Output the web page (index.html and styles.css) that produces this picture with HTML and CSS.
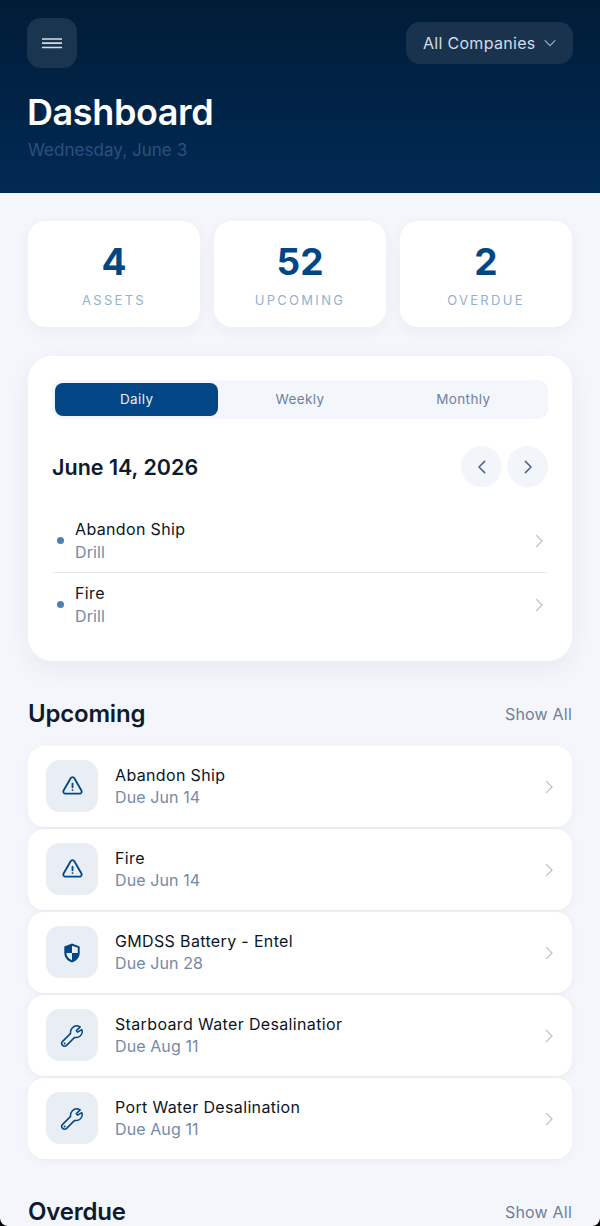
FILE: index.html
```html
<!doctype html>
<html>
  <head>
    <meta name="viewport" content="width=device-width,initial-scale=1.0" />
    <title>Dashboard</title>
    <link rel="stylesheet" href="styles.css">
  </head>
  <body>
    <svg class="icon-defs" width="0" height="0">
      <symbol id="chev-right" viewBox="0 0 24 24"><path d="M8.500 4.500 16 12 8.500 19.500" fill="none" stroke="currentColor" stroke-linecap="round" stroke-linejoin="round"/></symbol>
      <symbol id="chev-left" viewBox="0 0 24 24"><path d="M15.500 4.500 8 12 15.500 19.500" fill="none" stroke="currentColor" stroke-linecap="round" stroke-linejoin="round"/></symbol>
      <symbol id="warn" viewBox="0 0 24 24"><path d="M12 9v3.750m-9.300 3.380c-.87 1.500.22 3.370 1.950 3.370h14.700c1.730 0 2.810-1.870 1.950-3.370L13.950 3.380c-.87-1.500-3.030-1.500-3.900 0L2.700 16.130ZM12 15.750h.01v.01H12v-.01Z" fill="none" stroke="currentColor" stroke-width="1.900" stroke-linecap="round" stroke-linejoin="round"/></symbol>
      <symbol id="shield" viewBox="0 0 24 24"><path fill-rule="evenodd" d="M12 1.700 20.400 5v6.600c0 5-3.400 8.900-8.400 10.700-5-1.800-8.400-5.700-8.400-10.700V5L12 1.700ZM12 4v8H5.800c.3 3.700 2.900 6.500 6.200 7.900V12h6.200c.1-.4.100-.8.100-1.200V6.400L12 4Z" fill="currentColor"/></symbol>
      <symbol id="wrench" viewBox="0 0 24 24"><path d="M2.600 17.400 10.600 9.400C10 5.200 13.200 1.600 17.400 1.800L20.200 2.900 16.300 6.600 17.600 8.200 21.800 5.600 22.300 8.200C21.600 11.800 18.400 14 14.600 13.400L6.600 21.400C5.500 22.500 3.700 22.500 2.600 21.400 1.500 20.300 1.500 18.500 2.600 17.400Z" fill="none" stroke="currentColor" stroke-width="1.500" stroke-linejoin="round"/><circle cx="4.600" cy="19.400" r="1" fill="currentColor"/></symbol>
    </svg>

    <div class="screen">
      <header class="hero">
        <div class="hero-top">
          <button class="menu-btn">
            <svg width="20" height="20" viewBox="0 0 20 20"><path d="M0 6h20M0 10.200h20M0 14.500h20" stroke="#d5dde6" stroke-width="1.700" fill="none"/></svg>
          </button>
          <button class="company-btn">
            <span>All Companies</span>
            <svg class="company-chev" width="14" height="14" viewBox="0 0 24 24"><path d="M3.500 8 12 16.500 20.500 8" fill="none" stroke="currentColor" stroke-width="1.800" stroke-linecap="round" stroke-linejoin="round"/></svg>
          </button>
        </div>
        <h1>Dashboard</h1>
        <p class="hero-date">Wednesday, June 3</p>
      </header>

      <main class="content">
        <section class="stats">
          <div class="stat"><div class="stat-num">4</div><div class="stat-label">ASSETS</div></div>
          <div class="stat"><div class="stat-num">52</div><div class="stat-label">UPCOMING</div></div>
          <div class="stat"><div class="stat-num">2</div><div class="stat-label">OVERDUE</div></div>
        </section>

        <section class="calendar">
          <div class="tabs">
            <div class="tab active">Daily</div>
            <div class="tab">Weekly</div>
            <div class="tab">Monthly</div>
          </div>
          <div class="cal-head">
            <h2>June 14, 2026</h2>
            <div class="cal-nav">
              <button class="round-btn"><svg width="18" height="18"><use href="#chev-left"/></svg></button>
              <button class="round-btn"><svg width="18" height="18"><use href="#chev-right"/></svg></button>
            </div>
          </div>
          <div class="event">
            <span class="dot"></span>
            <div class="event-text"><div class="name">Abandon Ship</div><div class="sub">Drill</div></div>
            <svg class="chev" width="18" height="18"><use href="#chev-right"/></svg>
          </div>
          <div class="event">
            <span class="dot"></span>
            <div class="event-text"><div class="name">Fire</div><div class="sub">Drill</div></div>
            <svg class="chev" width="18" height="18"><use href="#chev-right"/></svg>
          </div>
        </section>

        <div class="section-head">
          <h3>Upcoming</h3>
          <a class="show-all">Show All</a>
        </div>
        <section class="task-list">
          <div class="task">
            <div class="task-icon"><svg width="23" height="23"><use href="#warn"/></svg></div>
            <div class="event-text"><div class="name">Abandon Ship</div><div class="sub">Due Jun 14</div></div>
            <svg class="chev" width="18" height="18"><use href="#chev-right"/></svg>
          </div>
          <div class="task">
            <div class="task-icon"><svg width="23" height="23"><use href="#warn"/></svg></div>
            <div class="event-text"><div class="name">Fire</div><div class="sub">Due Jun 14</div></div>
            <svg class="chev" width="18" height="18"><use href="#chev-right"/></svg>
          </div>
          <div class="task">
            <div class="task-icon"><svg width="22" height="22"><use href="#shield"/></svg></div>
            <div class="event-text"><div class="name">GMDSS Battery - Entel</div><div class="sub">Due Jun 28</div></div>
            <svg class="chev" width="18" height="18"><use href="#chev-right"/></svg>
          </div>
          <div class="task">
            <div class="task-icon"><svg width="24" height="24"><use href="#wrench"/></svg></div>
            <div class="event-text"><div class="name">Starboard Water Desalinatior</div><div class="sub">Due Aug 11</div></div>
            <svg class="chev" width="18" height="18"><use href="#chev-right"/></svg>
          </div>
          <div class="task">
            <div class="task-icon"><svg width="24" height="24"><use href="#wrench"/></svg></div>
            <div class="event-text"><div class="name">Port Water Desalination</div><div class="sub">Due Aug 11</div></div>
            <svg class="chev" width="18" height="18"><use href="#chev-right"/></svg>
          </div>
        </section>

        <div class="section-head overdue">
          <h3>Overdue</h3>
          <a class="show-all">Show All</a>
        </div>
      </main>
    </div>
  </body>
</html>
```

FILE: styles.css
```css
html, body {
  margin: 0;
  background: #000;
}
body {
  font-family: Inter, "Liberation Sans", sans-serif;
  color: #0f1b2b;
}
button {
  font-family: inherit;
  border: none;
  padding: 0;
}
h1, h2, h3, p {
  margin: 0;
}
.icon-defs {
  position: absolute;
}

.screen {
  width: 600px;
  height: 1226px;
  overflow: hidden;
  background: #f4f6fb;
  border-radius: 0 0 8px 8px;
}

.hero {
  height: 193px;
  box-sizing: border-box;
  padding: 18px 27px 0 27px;
  background: linear-gradient(180deg, #001c37 0%, #012a54 100%);
}
.hero-top {
  display: flex;
  justify-content: space-between;
  align-items: center;
  height: 50px;
}
.menu-btn {
  width: 50px;
  height: 50px;
  border-radius: 14px;
  background: #1a3550;
  display: flex;
  align-items: center;
  justify-content: center;
}
.company-btn {
  width: 167px;
  height: 42px;
  border-radius: 14px;
  background: #19334f;
  color: #d3dbe4;
  font-size: 16px;
  letter-spacing: 0.3px;
  display: flex;
  align-items: center;
  padding-left: 17px;
  gap: 7px;
  box-sizing: border-box;
}
.company-chev {
  color: #a9b6c4;
}
.hero h1 {
  margin: 22px 0 0;
  font-size: 36px;
  line-height: 44px;
  font-weight: 600;
  letter-spacing: -0.4px;
  color: #fff;
}
.hero-date {
  margin: 6px 0 0 1px;
  font-size: 17.100px;
  line-height: 20px;
  color: #2a5180;
}

.content {
  padding: 28px 28px 0;
}

.stats {
  display: grid;
  grid-template-columns: repeat(3, 1fr);
  gap: 14px;
}
.stat {
  height: 106px;
  box-sizing: border-box;
  background: #fff;
  border-radius: 18px;
  box-shadow: 0 4px 14px rgba(30, 50, 90, 0.05);
  text-align: center;
  padding-top: 19px;
}
.stat-num {
  font-size: 37px;
  line-height: 44px;
  font-weight: 700;
  color: #034685;
}
.stat-label {
  margin-top: 8px;
  font-size: 13px;
  line-height: 16px;
  letter-spacing: 2.300px;
  color: #93b2d0;
}

.calendar {
  margin-top: 29px;
  height: 305px;
  box-sizing: border-box;
  background: #fff;
  border-radius: 24px;
  box-shadow: 0 8px 24px rgba(30, 50, 90, 0.06);
  padding: 24px 24px 0;
}
.tabs {
  display: grid;
  grid-template-columns: repeat(3, 1fr);
  height: 39px;
  box-sizing: border-box;
  padding: 3px;
  background: #f3f6fa;
  border-radius: 10px;
}
.tab {
  display: flex;
  align-items: center;
  justify-content: center;
  padding-bottom: 1px;
  font-size: 13.500px;
  letter-spacing: 0.4px;
  color: #6f7f9d;
  border-radius: 8px;
}
.tab.active {
  background: #034685;
  color: #e9eff6;
}

.cal-head {
  display: flex;
  justify-content: space-between;
  align-items: center;
  margin-top: 27px;
  height: 41px;
}
.cal-head h2 {
  font-size: 21.500px;
  font-weight: 600;
  color: #0f1b2b;
}
.cal-nav {
  display: flex;
  gap: 5px;
}
.round-btn {
  width: 41px;
  height: 41px;
  border-radius: 50%;
  background: #f2f5f9;
  color: #4f6488;
  stroke-width: 2;
  display: flex;
  align-items: center;
  justify-content: center;
}

.event {
  display: flex;
  align-items: center;
  height: 63px;
  border-bottom: 1px solid #e6e9ee;
  padding: 0 0 0 5px;
}
.cal-head + .event {
  margin-top: 22px;
}
.event:last-child {
  border-bottom: none;
}
.dot {
  width: 7px;
  height: 7px;
  border-radius: 50%;
  background: #4682b8;
  margin-right: 11px;
}
.event-text {
  flex: 1;
}
.name {
  font-size: 16px;
  line-height: 23px;
  letter-spacing: 0.35px;
  color: #0b1625;
}
.sub {
  font-size: 16px;
  line-height: 22px;
  letter-spacing: 0.1px;
  color: #748aa8;
}
.chev {
  color: #bcc1c8;
  stroke-width: 1.700;
}

.section-head {
  display: flex;
  justify-content: space-between;
  align-items: center;
  margin-top: 36px;
  height: 34px;
}
.section-head h3 {
  padding-bottom: 1px;
  font-size: 24px;
  font-weight: 600;
  letter-spacing: -0.2px;
  color: #0f1b2b;
}
.show-all {
  font-size: 16px;
  letter-spacing: 0.2px;
  color: #6c7f9c;
}

.task-list {
  margin-top: 15px;
  display: flex;
  flex-direction: column;
  gap: 2px;
}
.task {
  display: flex;
  align-items: center;
  height: 81px;
  box-sizing: border-box;
  background: #fff;
  border-radius: 16px;
  box-shadow: 0 2px 8px rgba(30, 50, 90, 0.05);
  padding: 0 14px 0 18px;
}
.task .event-text {
  padding-bottom: 1px;
}
.task .name {
  line-height: 22px;
}
.task-icon {
  width: 52px;
  height: 52px;
  box-sizing: border-box;
  padding-top: 2px;
  margin-bottom: 2px;
  border-radius: 14px;
  background: #e9eef5;
  color: #034685;
  display: flex;
  align-items: center;
  justify-content: center;
  margin-right: 17px;
}
```
